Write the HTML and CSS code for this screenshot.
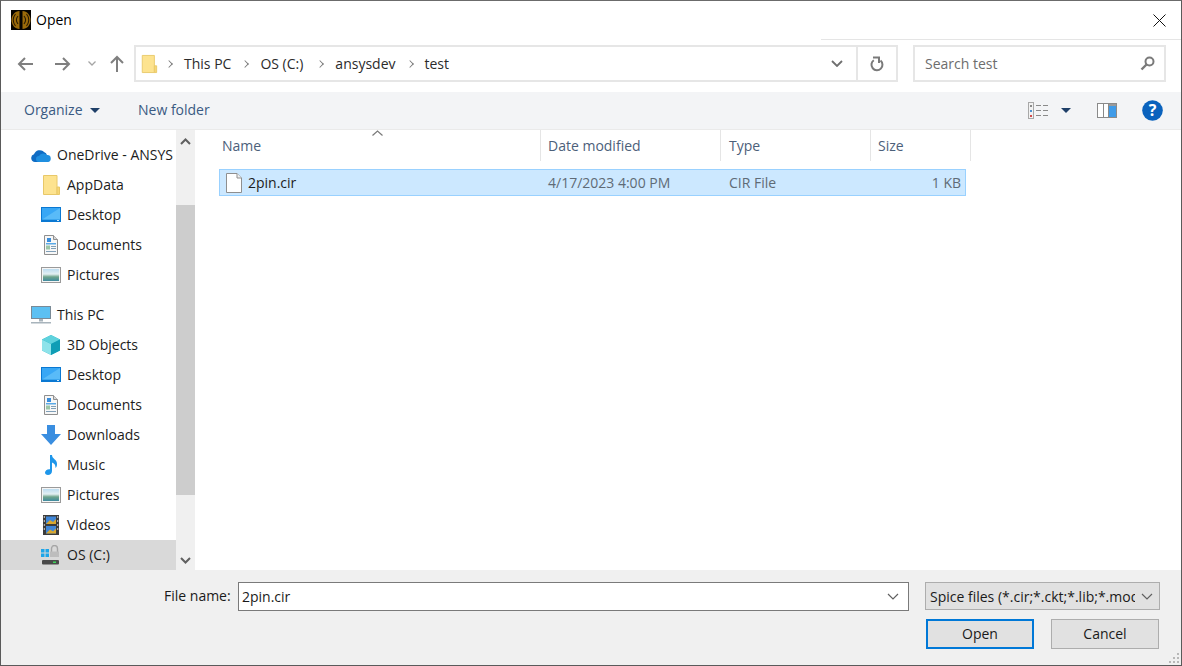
FILE: index.html
```html
<!DOCTYPE html>
<html lang="en">
<head>
<meta charset="utf-8">
<title>Open</title>
<link rel="stylesheet" href="styles.css">
</head>
<body>
<svg class="defs" width="0" height="0">
  <defs>
    <linearGradient id="sky" x1="0" y1="0" x2="0" y2="1">
      <stop offset="0" stop-color="#bcdcf0"/><stop offset=".42" stop-color="#e4eff3"/><stop offset=".66" stop-color="#6fa48c"/><stop offset="1" stop-color="#3f8aa0"/>
    </linearGradient>
    <symbol id="folder" viewBox="0 0 20 22">
      <path d="M2.500 1.500h13.500v19h-13.500z" fill="#fde38f" stroke="#e8c869"/>
      <path d="M16 13h2.500v7.500h-2.500z" fill="#f7d675" stroke="#e8c869"/>
    </symbol>
    <symbol id="desktop" viewBox="0 0 20 16">
      <rect x="0" y="0" width="20" height="15" fill="#0a78d2"/>
      <rect x="1" y="1" width="18" height="11.500" fill="#38a7f5"/>
      <path d="M1 12.500L19 1v11.500z" fill="#59bbf8"/>
      <rect x="16" y="13" width="2" height="1" fill="#cfe8fa"/>
    </symbol>
    <symbol id="docs" viewBox="0 0 20 20">
      <path d="M3.500 .5h9l4 4v15h-13z" fill="#f7f7f7" stroke="#8f8f8f"/>
      <path d="M12.500 .5v4h4" fill="#d8d8d8" stroke="#8f8f8f"/>
      <path d="M6 3h4v4h-4z" fill="#3a8edc"/>
      <path d="M5 8h10v1.500h-10z" fill="#5aa9e6"/>
      <path d="M5 10.500h4v4h-4z" fill="#9cc6a8"/>
      <path d="M10 11h5v1h-5zM10 13h5v1h-5zM5 16h10v1h-10z" fill="#7f9fb8"/>
    </symbol>
    <symbol id="pics" viewBox="0 0 20 16">
      <rect x=".5" y=".5" width="19" height="15" fill="#f5f5f5" stroke="#9a9a9a"/>
      <rect x="2" y="2" width="16" height="12" fill="url(#sky)"/>
    </symbol>
  </defs>
</svg>
<div class="dialog">
  <header class="titlebar">
    <svg class="app-icon" width="20" height="20" viewBox="0 0 20 20">
      <rect width="20" height="20" fill="#050300"/>
      <path d="M8.500 1C4 1 .5 5 .5 10s3.500 9 8 9z" fill="#9a6a0a"/>
      <path d="M11.500 1C16 1 19.500 5 19.500 10s-3.500 9-8 9z" fill="#9a6a0a"/>
      <path d="M7 6c-2 2.500-2 5.500 0 8M4.500 4c-3 3.500-3 8.500 0 12M13 6c2 2.500 2 5.500 0 8M15.500 4c3 3.500 3 8.500 0 12" fill="none" stroke="#2a1b03" stroke-width="1.100"/>
    </svg>
    <span class="title">Open</span>
    <svg class="close" width="13" height="13" viewBox="0 0 13 13"><path d="M.5 .5l12 12M12.500 .5l-12 12" stroke="#111" fill="none"/></svg>
  </header>

  <div class="navbar">
    <div class="nav-buttons">
      <svg class="nav-arrow" width="17" height="14" viewBox="0 0 17 14"><path d="M16 7H2M8 1L2 7l6 6" fill="none" stroke="#7f7f7f" stroke-width="2"/></svg>
      <svg class="nav-arrow fwd" width="17" height="14" viewBox="0 0 17 14"><path d="M1 7h14M9 1l6 6-6 6" fill="none" stroke="#7f7f7f" stroke-width="2"/></svg>
      <svg class="nav-drop" width="8" height="5" viewBox="0 0 8 5"><path d="M.5 .5L4 4 7.500 .5" fill="none" stroke="#a5a5a5" stroke-width="1.300"/></svg>
      <svg class="nav-up" width="14" height="17" viewBox="0 0 14 17"><path d="M7 17V2M1 8l6-6 6 6" fill="none" stroke="#7f7f7f" stroke-width="2"/></svg>
    </div>
    <div class="address">
      <svg class="addr-folder" width="18" height="22"><use href="#folder"/></svg>
      <span class="crumb-sep"></span><span class="crumb">This PC</span>
      <span class="crumb-sep"></span><span class="crumb crumb-wide">OS (C:)</span>
      <span class="crumb-sep"></span><span class="crumb">ansysdev</span>
      <span class="crumb-sep"></span><span class="crumb">test</span>
      <svg class="addr-drop" width="12" height="7" viewBox="0 0 12 7"><path d="M1 1l5 5 5-5" fill="none" stroke="#6f6f6f" stroke-width="1.800"/></svg>
      <span class="refresh">
        <svg width="14" height="16" viewBox="0 0 14 16"><path d="M10.500 4.500A5.500 5.500 0 1 1 3.800 4.200" fill="none" stroke="#7a7a7a" stroke-width="2"/><path d="M3 1h6v5.500" fill="none" stroke="#7a7a7a" stroke-width="2" transform="translate(0 .5)"/></svg>
      </span>
    </div>
    <div class="search">
      <span class="search-text">Search test</span>
      <svg width="15" height="15" viewBox="0 0 15 15"><circle cx="9.500" cy="5.500" r="4" fill="none" stroke="#7a7a7a" stroke-width="2"/><path d="M6.500 8.500L1.500 13.500" stroke="#7a7a7a" stroke-width="2.400"/></svg>
    </div>
  </div>

  <div class="toolbar">
    <span class="tool organize"><span class="tool-text">Organize</span><i class="caret"></i></span>
    <span class="tool"><span class="tool-text">New folder</span></span>
    <span class="tool-right">
      <svg class="views" width="21" height="17" viewBox="0 0 21 17">
        <rect x=".5" y=".5" width="5" height="16" fill="#f2f2f2" stroke="#a8a8a8"/>
        <rect x="2" y="3" width="2" height="2" fill="#8a8a8a"/><rect x="2" y="8" width="2" height="2" fill="#4a90d0"/><rect x="2" y="13" width="2" height="2" fill="#d04a4a"/>
        <path d="M8 3.500h5M15 3.500h5M8 8.500h5M15 8.500h5M8 13.500h5M15 13.500h5" stroke="#8a8a8a"/>
      </svg>
      <i class="caret views-caret"></i>
      <svg class="pane" width="20" height="15" viewBox="0 0 20 15">
        <rect width="20" height="15" fill="#8a8a8a"/>
        <rect x="1" y="1" width="5" height="13" fill="#fff"/><rect x="7" y="1" width="4" height="13" fill="#fff"/>
        <rect x="12" y="1" width="7" height="13" fill="#3f9be8"/><rect x="12" y="1" width="7" height="2" fill="#9a9a9a"/>
      </svg>
      <svg class="help" width="21" height="21" viewBox="0 0 21 21">
        <circle cx="10.500" cy="10.500" r="10.300" fill="#0a62bd"/>
        <text x="10.500" y="16" class="help-mark">?</text>
      </svg>
    </span>
  </div>

  <div class="main">
    <nav class="sidebar">
      <div class="tree">
        <div class="tree-group">
          <div class="row top"><svg class="ico" width="20" height="13" viewBox="0 0 20 13"><path d="M4 13a4 4 0 0 1-1-7.800A6 6 0 0 1 13 3a4.500 4.500 0 0 1 3 3.500A3.300 3.300 0 0 1 16.500 13z" fill="#0f6cc4"/><path d="M8 13a3 3 0 0 1 0-6 5 5 0 0 1 8-1 3.400 3.400 0 0 1 .5 7z" fill="#1f8fe0"/></svg><span>OneDrive - ANSYS</span></div>
          <div class="row"><svg class="ico" width="20" height="22"><use href="#folder"/></svg><span>AppData</span></div>
          <div class="row"><svg class="ico" width="20" height="16"><use href="#desktop"/></svg><span>Desktop</span></div>
          <div class="row"><svg class="ico" width="20" height="20"><use href="#docs"/></svg><span>Documents</span></div>
          <div class="row"><svg class="ico" width="20" height="16"><use href="#pics"/></svg><span>Pictures</span></div>
        </div>
        <div class="tree-group">
          <div class="row top"><svg class="ico" width="20" height="18" viewBox="0 0 20 18"><rect width="20" height="13" fill="#7a8a96"/><rect x="1" y="1" width="18" height="11" fill="#5cc0f2"/><rect x="8" y="13" width="4" height="2.500" fill="#a8b4bc"/><rect y="16" width="20" height="1.500" fill="#a8b4bc"/></svg><span>This PC</span></div>
          <div class="row"><svg class="ico" width="20" height="20" viewBox="0 0 20 20"><path d="M10 0l9 4.500v11L10 20l-9-4.500v-11z" fill="#2fb6c9"/><path d="M1 4.500L10 9v11l-9-4.500z" fill="#8ee3ea"/><path d="M10 0l9 4.500L10 9 1 4.500z" fill="#5fd2dd"/><path d="M10 9l9-4.500v11L10 20z" fill="#0f9db5"/></svg><span>3D Objects</span></div>
          <div class="row"><svg class="ico" width="20" height="16"><use href="#desktop"/></svg><span>Desktop</span></div>
          <div class="row"><svg class="ico" width="20" height="20"><use href="#docs"/></svg><span>Documents</span></div>
          <div class="row"><svg class="ico" width="20" height="20" viewBox="0 0 20 20"><path d="M6 0h8v9h6L10 20 0 9h6z" fill="#3a8ee0"/></svg><span>Downloads</span></div>
          <div class="row"><svg class="ico" width="20" height="20" viewBox="0 0 20 20"><path d="M9 0h2c0 4 5 4 5 9 0 2-.5 3-1.500 4 .3-3-1.500-5-3.500-5.500V16c0 2.500-2 4-4 4s-3-1-3-2.500S6 14 9 14.300z" fill="#1e96ea"/></svg><span>Music</span></div>
          <div class="row"><svg class="ico" width="20" height="16"><use href="#pics"/></svg><span>Pictures</span></div>
          <div class="row"><svg class="ico" width="20" height="20" viewBox="0 0 20 20"><rect x="2" width="16" height="20" fill="#3c3c3c"/><rect x="5" y="1.500" width="10" height="7.500" fill="#3f86d8"/><path d="M5 9l4-4 3 2 3-3v5z" fill="#d9a830"/><rect x="5" y="11" width="10" height="7.500" fill="#3f86d8"/><path d="M5 18.500l4-4 3 2 3-3v5z" fill="#d9a830"/><path d="M2.800 1h1v2h-1zM2.800 5h1v2h-1zM2.800 9h1v2h-1zM2.800 13h1v2h-1zM16.200 1h1v2h-1zM16.200 5h1v2h-1zM16.200 9h1v2h-1zM16.200 13h1v2h-1z" fill="#c8c8c8"/></svg><span>Videos</span></div>
          <div class="row selected"><svg class="ico" width="20" height="20" viewBox="0 0 20 20"><path d="M0 4h3.500v3.500H0zM4.500 4H8v3.500H4.500zM0 8.500h3.500V12H0zM4.500 8.500H8V12H4.500z" fill="#1ea5e8"/><path d="M10.500 7V3.500a3 3 0 0 1 6 0V7" fill="none" stroke="#a5a5a5" stroke-width="1.400"/><rect x="9" y="6.500" width="9" height="5.500" fill="#bdbdbd"/><rect x="1" y="15" width="17" height="4.500" rx="1" fill="#4a4a4a"/><rect x="12" y="16.500" width="3" height="1.500" fill="#3fd45a"/></svg><span>OS (C:)</span></div>
        </div>
      </div>
      <div class="scrollbar">
        <svg class="scroll-arrow" width="11" height="7" viewBox="0 0 11 7"><path d="M1 6l4.500-4.500L10 6" fill="none" stroke="#606060" stroke-width="2"/></svg>
        <div class="track"><div class="thumb"></div></div>
        <svg class="scroll-arrow" width="11" height="7" viewBox="0 0 11 7"><path d="M1 1l4.500 4.500L10 1" fill="none" stroke="#606060" stroke-width="2"/></svg>
      </div>
    </nav>
    <section class="files">
      <div class="columns">
        <svg class="sort" width="11" height="6" viewBox="0 0 11 6"><path d="M.5 5.500l5-4.500 5 4.500" fill="none" stroke="#7a7a7a" stroke-width="1.200"/></svg>
        <div class="col col-name">Name</div>
        <div class="col col-date">Date modified</div>
        <div class="col col-type">Type</div>
        <div class="col col-size">Size</div>
      </div>
      <div class="file-row">
        <div class="cell cell-name">
          <svg width="16" height="20" viewBox="0 0 16 20"><path d="M.5 .5h10.500l4.500 4.500v14.500h-15z" fill="#fff" stroke="#8f8f8f"/><path d="M11 .5v4.500h4.500" fill="#f0f0f0" stroke="#8f8f8f"/></svg>
          <span class="file-name">2pin.cir</span>
        </div>
        <div class="cell cell-date">4/17/2023 4:00 PM</div>
        <div class="cell cell-type">CIR File</div>
        <div class="cell cell-size">1 KB</div>
      </div>
    </section>
  </div>

  <footer class="footer">
    <div class="footer-row">
      <label class="file-label">File name:</label>
      <div class="file-input">
        <span class="file-value">2pin.cir</span>
        <svg width="12" height="7" viewBox="0 0 12 7"><path d="M1 1l5 5 5-5" fill="none" stroke="#606060" stroke-width="1.200"/></svg>
      </div>
      <div class="file-type">
        <span class="file-type-text">Spice files (*.cir;*.ckt;*.lib;*.mod;*.sp)</span>
        <svg width="12" height="7" viewBox="0 0 12 7"><path d="M1 1l5 5 5-5" fill="none" stroke="#606060" stroke-width="1.200"/></svg>
      </div>
    </div>
    <div class="footer-actions">
      <button class="btn primary">Open</button>
      <button class="btn">Cancel</button>
    </div>
    <svg class="grip" width="11" height="11" viewBox="0 0 11 11"><path d="M8 0h2v2H8zM4 4h2v2H4zM8 4h2v2H8zM0 8h2v2H0zM4 8h2v2H4zM8 8h2v2H8z" fill="#b8b8b8"/></svg>
  </footer>
</div>
</body>
</html>
```
FILE: styles.css
```css
* { box-sizing: border-box; }
html, body { margin: 0; padding: 0; height: 100%; background: #fff; overflow: hidden; }
body { font-family: "Open Sans", "Noto Sans", "Liberation Sans", sans-serif; font-size: 14px; color: #1a1a1a; }
.defs { position: absolute; }

.dialog {
  position: relative;
  width: 1182px;
  height: 666px;
  display: flex;
  flex-direction: column;
  background: #fff;
  border: 1px solid #5a5a5a;
  border-top-color: #6b6b6b;
}

.titlebar {
  height: 38px;
  flex: none;
  display: flex;
  align-items: center;
  padding: 0 15px 0 10px;
  position: relative;
}
.titlebar::after {
  content: "";
  position: absolute;
  left: 820px;
  right: 0;
  bottom: -1px;
  height: 1px;
  background: #e5e5e5;
}
.app-icon { flex: none; }
.title { margin: 0 0 2px 5px; font-size: 14px; color: #000; }
.close { margin-left: auto; }

.navbar {
  height: 53px;
  flex: none;
  display: flex;
  align-items: flex-start;
  padding-top: 6px;
}
.nav-buttons {
  width: 133px;
  height: 37px;
  flex: none;
  display: flex;
  align-items: center;
  padding-left: 16px;
}
.fwd { margin-left: 20px; }
.nav-drop { margin-left: 17px; }
.nav-up { margin-left: 14px; }

.address {
  width: 764px;
  height: 37px;
  flex: none;
  display: flex;
  align-items: center;
  border: 2px solid #e6e6e6;
  padding-left: 4px;
  color: #2b2b2b;
}
.addr-folder { flex: none; }
.crumb-sep {
  width: 6px;
  height: 6px;
  margin: 0 12px 0 8px;
  border-top: 1.500px solid #777;
  border-right: 1.500px solid #777;
  transform: rotate(45deg) scale(.9);
  flex: none;
}
.crumb { margin-right: 3px; }
.crumb-wide { margin-right: 6px; }
.addr-drop { margin-left: auto; margin-right: 13px; }
.refresh {
  width: 40px;
  height: 33px;
  flex: none;
  display: flex;
  align-items: center;
  justify-content: center;
  border-left: 2px solid #e6e6e6;
}
.search {
  margin-left: 15px;
  width: 253px;
  height: 37px;
  flex: none;
  display: flex;
  align-items: center;
  justify-content: space-between;
  border: 2px solid #e6e6e6;
  padding: 0 9px 0 10px;
}
.search-text { color: #6d6d6d; }

.toolbar {
  height: 38px;
  flex: none;
  display: flex;
  align-items: center;
  background: #f3f4f6;
  border-bottom: 1px solid #eaeaea;
  padding-left: 23px;
  color: #3a5a82;
}
.tool { display: inline-flex; align-items: center; }
.tool-text { margin-bottom: 2px; }
.organize { width: 114px; }
.caret {
  display: inline-block;
  width: 0;
  height: 0;
  margin-left: 7px;
  border-left: 5px solid transparent;
  border-right: 5px solid transparent;
  border-top: 5px solid #1f3f68;
}
.tool-right { margin-left: auto; display: flex; align-items: center; padding-right: 18px; }
.views-caret { margin-left: 12px; }
.pane { margin-left: 26px; }
.help { margin-left: 25px; }
.help-mark { fill: #fff; font-size: 16px; font-weight: 700; text-anchor: middle; font-family: "Open Sans", sans-serif; }

.main { flex: 1; min-height: 0; display: flex; }
.sidebar { width: 194px; flex: none; display: flex; }
.tree { width: 175px; flex: none; padding-top: 10px; overflow: hidden; }
.tree-group + .tree-group { margin-top: 10px; }
.row {
  height: 30px;
  display: flex;
  align-items: center;
  white-space: nowrap;
  padding-left: 40px;
  color: #1c1c1c;
}
.row span { margin-bottom: 2px; }
.row.top { padding-left: 30px; }
.row.selected { background: #d9d9d9; }
.row .ico { flex: none; margin-right: 6px; }
.scrollbar {
  width: 19px;
  flex: none;
  display: flex;
  flex-direction: column;
  align-items: center;
  background: #f0f0f0;
}
.scroll-arrow { flex: none; margin: 8px 0 10px; }
.scrollbar .scroll-arrow:last-child { margin: 25px 0 6px; }
.track { flex: 1; width: 100%; padding-top: 50px; }
.thumb { height: 290px; background: #cdcdcd; }

.files { flex: 1; min-width: 0; padding-left: 24px; position: relative; }
.columns { display: flex; height: 31px; color: #4c607a; }
.col { height: 100%; display: flex; align-items: center; padding: 0 0 1px 8px; border-right: 1px solid #e5e5e5; }
.col-name { width: 322px; padding-left: 3px; }
.col-date { width: 180px; padding-left: 7px; }
.col-type { width: 150px; }
.col-size { width: 100px; padding-left: 7px; }
.sort { position: absolute; left: 177px; top: 0; }

.file-row {
  margin-top: 8px;
  width: 747px;
  height: 27px;
  display: flex;
  align-items: center;
  background: #cce8ff;
  border: 1px solid #99d1ff;
  color: #5f6b76;
}
.cell { white-space: nowrap; }
.cell-name { width: 321px; display: flex; align-items: center; gap: 6px; padding-left: 6px; color: #1c1c1c; }
.cell-date { width: 180px; padding-left: 7px; }
.cell-type { width: 150px; padding-left: 8px; }
.cell-size { width: 94px; text-align: right; padding-right: 4px; }

.footer {
  height: 95px;
  flex: none;
  background: #f0f0f0;
  position: relative;
  display: flex;
  flex-direction: column;
  padding-top: 12px;
}
.footer-row { display: flex; align-items: flex-start; height: 29px; padding-left: 163px; }
.file-label { width: 74px; line-height: 27px; color: #1a1a1a; }
.file-input {
  width: 671px;
  height: 29px;
  display: flex;
  align-items: center;
  justify-content: space-between;
  background: #fff;
  border: 1px solid #7a7a7a;
  padding: 0 9px 0 3px;
}
.file-type {
  margin-left: 16px;
  width: 235px;
  height: 28px;
  display: flex;
  align-items: center;
  justify-content: space-between;
  background: #e1e1e1;
  border: 1px solid #adadad;
  padding: 0 6px 0 4px;
}
.file-type-text { width: 205px; overflow: hidden; white-space: nowrap; }
.footer-actions { display: flex; gap: 17px; margin-top: 8px; padding-left: 925px; }
.btn {
  width: 108px;
  height: 30px;
  padding: 0 0 2px;
  font: inherit;
  color: #1a1a1a;
  background: #e1e1e1;
  border: 1px solid #adadad;
}
.btn.primary { border: 2px solid #0078d7; }
.grip { position: absolute; right: 1px; bottom: 1px; }
```
